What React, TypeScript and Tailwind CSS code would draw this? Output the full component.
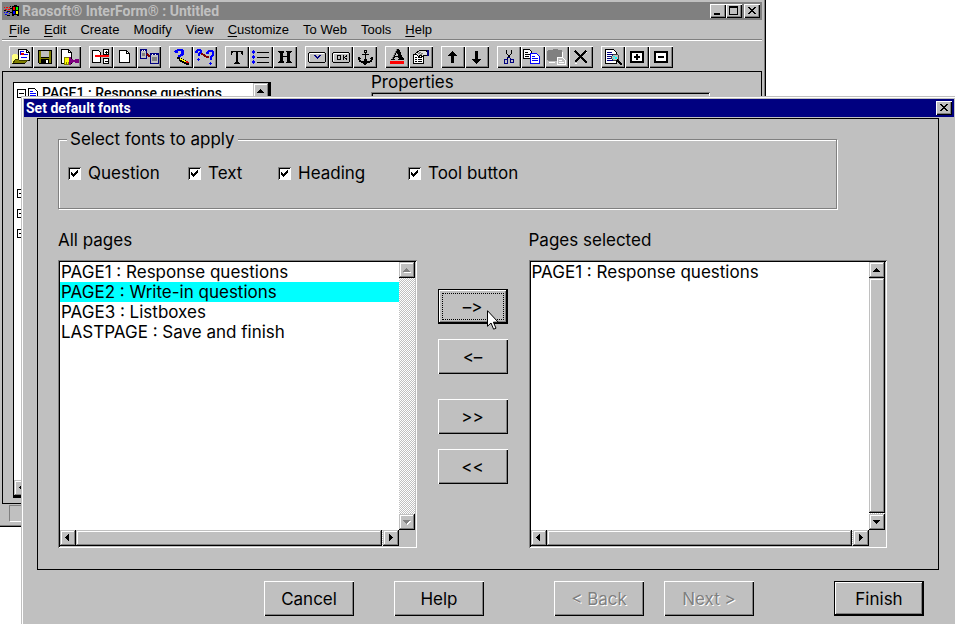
import React, { useState } from 'react';
import clsx from 'clsx';

const raised = 'bg-[#c0c0c0] shadow-[inset_1px_1px_#fff,inset_-1px_-1px_#000,inset_-2px_-2px_#808080]';
const scrollRaised =
  'bg-[#c0c0c0] shadow-[inset_-1px_-1px_#000,inset_1px_1px_#c0c0c0,inset_-2px_-2px_#808080,inset_2px_2px_#fff]';
const sunken = 'shadow-[inset_1px_1px_#808080,inset_-1px_-1px_#fff,inset_2px_2px_#000]';

type IconName =
  | 'open' | 'save' | 'preview' | 'split' | 'page' | 'link' | 'ask' | 'branch'
  | 'text' | 'list' | 'heading' | 'combo' | 'ok' | 'anchor' | 'font' | 'props'
  | 'up' | 'down' | 'cut' | 'copy' | 'paste' | 'delete' | 'find' | 'plus' | 'minus';

const toolbarGroups: IconName[][] = [
  ['open', 'save', 'preview'],
  ['split', 'page', 'link'],
  ['ask', 'branch'],
  ['text', 'list', 'heading'],
  ['combo', 'ok', 'anchor'],
  ['font', 'props'],
  ['up', 'down'],
  ['cut', 'copy', 'paste', 'delete'],
  ['find', 'plus', 'minus'],
];

const menuItems = [
  { label: 'File', underline: true },
  { label: 'Edit', underline: true },
  { label: 'Create' },
  { label: 'Modify' },
  { label: 'View' },
  { label: 'Customize', underline: true },
  { label: 'To Web' },
  { label: 'Tools' },
  { label: 'Help', underline: true },
];

const pages = [
  'PAGE1 : Response questions',
  'PAGE2 : Write-in questions',
  'PAGE3 : Listboxes',
  'LASTPAGE : Save and finish',
];

// All toolbar icons are drawn on a 20x18 grid
const icons: Record<IconName, React.ReactNode> = {
  open: (
    <>
      <path d="M7.500 1.500h8l3 3v8h-11z" fill="#fff" stroke="#000" />
      <path d="M15.500 1.500v3h3" fill="none" stroke="#000" />
      <path d="M9 3h4v1H9zM9 3h1v4H9zM13 6h4v1h-4zM10 9h6v1h-6z" fill="#00f" />
      <path d="M10 5h3v2h-3z" fill="#e00000" />
      <path d="M1 7h1V6h4v1h1v4H4l-3 5z" fill="#ffff80" />
      <path d="M1.500 15.500l3-4h3l1 1h8l-3 3z" fill="#808000" stroke="#404000" />
      <path d="M2 15.500h12" stroke="#000" />
    </>
  ),
  save: (
    <>
      <path d="M3.500 2.500h13v13h-12l-1-1z" fill="#808000" stroke="#000" />
      <path d="M6 3h8v6H6z" fill="#c0c0c0" />
      <path d="M6 9h8v1H6zM6 11h8v5H6z" fill="#000" />
      <path d="M11 12h2v3h-2z" fill="#fff" />
    </>
  ),
  preview: (
    <>
      <path d="M2.500 1.500h7l3 3v11h-10z" fill="#fff" stroke="#000" />
      <path d="M9.500 1.500v3h3" fill="none" stroke="#000" />
      <path d="M5.500 9.500h5v7h-5z" fill="#ff0" stroke="#808000" />
      <path d="M7 14v2M9 14v2" stroke="#808000" />
      <path d="M10 9h2v8h-2zM12 11h2v4h-2zM14 12h2v2h-2zM16 11h4v4h-4z" fill="#800080" />
    </>
  ),
  split: (
    <>
      <path d="M1.500 2.500h6l2 2v10h-8z" fill="#fff" stroke="#000" />
      <path d="M12.500 1.500h5v5h-5zM12.500 10.500h5v5h-5z" fill="#fff" stroke="#000" />
      <path d="M14 4h3M15.500 2.500v3M14 13h3" stroke="#000" />
      <path d="M4 7h14v2H4z" fill="red" />
    </>
  ),
  page: (
    <>
      <path d="M4.500 2.500h7l3 3v9h-10z" fill="#fff" stroke="#000" />
      <path d="M11.500 2.500v3h3" fill="none" stroke="#000" />
    </>
  ),
  link: (
    <>
      <path d="M1.500 1.500h6v9h-6zM11.500 5.500h8v10h-8z" fill="#c0c0c0" stroke="#000080" />
      <path d="M1 1h7v2H1zM11 5h9v2h-9z" fill="#000080" />
      <path d="M3 5h3v3H3zM13 9h5v4h-5z" fill="#808080" />
      <path d="M3 2h1v1H3zM5 2h1v1H5zM13 6h1v1h-1zM16 6h1v1h-1z" fill="#fff" />
      <path d="M8 6l3 3" stroke="#800000" strokeWidth="2" />
    </>
  ),
  ask: (
    <>
      <path d="M3 3h1V2h2V1h6v1h1v5h-1v1h-2v1H7V7h2V6h1V3H7v2H4V4H3z" fill="#00f" />
      <path d="M6 9h3v1h2v1h2v1h2v1h2v1h1v3h-3v-1h-2v-1h-2v-1h-2v-1H8v-2H6z" fill="#000" />
      <path d="M9 10h1v1h2v1h2v1h1v1h-2v-1h-2v-1H9z" fill="#ff0" />
      <path d="M15 13h2v1h1v1h-3z" fill="#e00000" />
    </>
  ),
  branch: (
    <>
      <path d="M0 3h1V2h1V1h4v1h1v3H6v1H5v2H3V5h1V4h1V3H3v2H0z" fill="#00f" />
      <path d="M11 4h1V3h1V2h5v1h1v5h-1v1h-1v3h-2V8h1V7h1V4h-3v2h-3z" fill="#00f" />
      <path d="M3 10h1v1h1v1H4v1H3v-1H2v-1h1zM15 14h1v1h1v1h-1v1h-1v-1h-1v-1h1z" fill="#00f" />
      <path d="M6 5h2v1h2v1h1v1h3v2h-3V9H9V8H8V7H6z" fill="#800000" />
    </>
  ),
  text: (
    <path d="M4 3h12v4h-1l-1-3h-3v10l2 1v1H7v-1l2-1V4H6L5 7H4z" fill="#000" />
  ),
  list: (
    <>
      <path d="M6 4.500h12M6 9.500h12M6 14.500h12" stroke="#000" />
      <path d="M2 2h1v1h1v2H3v1H2V5H1V3h1zM2 7h1v1h1v2H3v1H2v-1H1V8h1zM2 12h1v1h1v2H3v1H2v-1H1v-2h1z" fill="#00f" />
    </>
  ),
  heading: (
    <path d="M3 3h6v1L8 5v3h4V5l-1-1V3h6v1l-2 1v8l2 1v1h-6v-1l1-1V9H8v4l1 1v1H3v-1l2-1V5L3 4z" fill="#000" />
  ),
  combo: (
    <>
      <path d="M1.500 5.500l1-1h15l1 1v8l-1 1h-15l-1-1z" fill="#c0c0c0" stroke="#000" />
      <path d="M3 5.500h14M2.500 6v7" stroke="#fff" />
      <path d="M7 7h2v1h1v1h1V8h1V7h2v1h-1v1h-1v1h-1v1h-1v-1H9V9H8V8H7z" fill="#000080" />
    </>
  ),
  ok: (
    <>
      <path d="M1.500 5.500l1-1h15l1 1v8l-1 1h-15l-1-1z" fill="#c0c0c0" stroke="#000" />
      <path d="M3 5.500h14M2.500 6v7" stroke="#fff" />
      <path d="M6.500 7.500h3v4h-3zM12.500 7v5M15.500 7v1l-2 1.500 2 1.500v1" fill="none" stroke="#000" />
    </>
  ),
  anchor: (
    <>
      <path d="M9.500 2.500h2v2h-2z" fill="none" stroke="#000" />
      <path d="M10 5h1v10h-1zM7 6h7v1H7z" fill="#000" />
      <path d="M3 9h2v1h1v1H5v1h1v1h3v-2h3v2h3v-1h1v-1h-1v-1h1V9h2v3h-1v2h-2v1h-3v1h-1v1H9v-1H8v-1H6v-1H4v-2H3z" fill="#000" />
    </>
  ),
  font: (
    <>
      <path d="M10 1h2l4 9 1 1v1h-6v-1h1l-1-2H8l-1 2h1v1H4v-1l1-1zM10 4L8 8h3z" fill="#000" />
      <path d="M10 1L5 11" stroke="#808080" />
      <path d="M3 13h14v3H3z" fill="red" />
    </>
  ),
  props: (
    <>
      <path d="M2.500 6.500h10v9h-10z" fill="#fff" stroke="#000" />
      <path d="M4 9.500h2M7 9.500h4M4 11.500h2M7 11.500h4M4 13.500h2M7 13.500h4" stroke="#000" />
      <path d="M4.500 5.500l4-3h6l2 1v4h-3l-2 1-2-1-2 1z" fill="#ddd" stroke="#000" />
      <path d="M7 6l3-2M9 7l3-2" stroke="#808080" />
      <path d="M16 2h2v6h-2z" fill="#000080" />
    </>
  ),
  up: <path d="M9 3h1v1h1v1h1v1h1v1h1v1h-3v7H8V8H5V7h1V6h1V5h1V4h1z" fill="#000" />,
  down: <path d="M8 3h3v8h3v1h-1v1h-1v1h-1v1h-1v1H9v-1H8v-1H7v-1H6v-1H5v-1h3z" fill="#000" />,
  cut: (
    <>
      <path d="M7.500 2v3l4 6M12.500 2v3l-4 6" fill="none" stroke="#000" />
      <path d="M5.500 11.500h3v4h-3zM11.500 11.500h3v3h-3zM8 10l2-1 2 2" fill="none" stroke="#000080" />
    </>
  ),
  copy: (
    <>
      <path d="M.5 1.500h6l2 2v7h-8z" fill="#fff" stroke="#000" />
      <path d="M2 4.500h3M2 6.500h5M2 8.500h4" stroke="#000" />
      <path d="M7.500 5.500h6l3 3v7h-9z" fill="#fff" stroke="#00f" />
      <path d="M9 8.500h3M9 10.500h6M9 12.500h6" stroke="#00f" />
    </>
  ),
  paste: (
    <>
      <path d="M2 2h3l1-1h4l1 1h3l1 1v10H1L0 12V3z" fill="#808080" />
      <path d="M15.500 4v5M2 14.500h6" stroke="#fff" />
      <path d="M10.500 9.500h5l3 3v4h-8z" fill="#c0c0c0" stroke="#fff" />
      <path d="M12 12.500h3M12 14.500h5" stroke="#fff" />
    </>
  ),
  delete: (
    <>
      <path d="M4 3l12 12M15 3L4 14" stroke="#000" strokeWidth="2" />
      <path d="M4 15.500h2M15 4.500h1" stroke="#fff" />
    </>
  ),
  find: (
    <>
      <path d="M2.500 1.500h8l3 3v11h-11z" fill="#fff" stroke="#000" />
      <path d="M4 4.500h5M4 6.500h8M4 8.500h5M4 10.500h4M4 12.500h7" stroke="#000080" />
      <path d="M10.500 6.500h4l1 1v4l-1 1h-4l-2-2v-2z" fill="#c0c0c0" stroke="#404040" />
      <path d="M10 8h2v1h-2zM12 9h2v2h-2zM10 10h1v1h-1z" fill="#0ff" />
      <path d="M14 12l5 5" stroke="#000" strokeWidth="2" />
    </>
  ),
  plus: (
    <>
      <path d="M4 4h12v10H4z" fill="#fff" stroke="#000" strokeWidth="2" />
      <path d="M7 9h6M10 6v6" stroke="#000" strokeWidth="2" />
    </>
  ),
  minus: (
    <>
      <path d="M4 4h12v10H4z" fill="#fff" stroke="#000" strokeWidth="2" />
      <path d="M7 9h6" stroke="#000" strokeWidth="2" />
    </>
  ),
};

const arrowPaths = {
  up: 'M7 6h1v1h1v1h1v1h1v1H4V9h1V8h1V7h1z',
  down: 'M4 6h7v1h-1v1H9v1H8v1H7V9H6V8H5V7H4z',
  left: 'M9 4v7H8v-1H7V9H6V8H5V7h1V6h1V5h1V4z',
  right: 'M6 4v7h1v-1h1V9h1V8h1V7H9V6H8V5H7V4z',
};

const ScrollButton: React.FC<{ dir: keyof typeof arrowPaths; disabled?: boolean }> = ({ dir, disabled }) => (
  <button
    type="button"
    aria-label={`Scroll ${dir}`}
    disabled={disabled}
    className={clsx('block size-4 shrink-0', scrollRaised)}
  >
    <svg viewBox="0 0 16 16" className="size-4" shapeRendering="crispEdges">
      {disabled && <path d={arrowPaths[dir]} fill="#fff" transform="translate(1 1)" />}
      <path d={arrowPaths[dir]} fill={disabled ? '#808080' : '#000'} />
    </svg>
  </button>
);

const WindowButton: React.FC<{ label: string; path: string }> = ({ label, path }) => (
  <button type="button" aria-label={label} className={clsx('h-[14px] w-4', raised)}>
    <svg viewBox="0 0 16 14" className="h-[14px] w-4" shapeRendering="crispEdges">
      <path d={path} fill="#000" fillRule="evenodd" />
    </svg>
  </button>
);

const closePath = 'M4 3h2v1h1v1h2V4h1V3h2v1h-1v1h-1v1H9v1h1v1h1v1h1v1h-2V9H9V8H7v1H6v1H4V9h1V8h1V7h1V6H6V5H5V4H4z';

const track = 'bg-[repeating-conic-gradient(#fff_0_25%,#c0c0c0_0_50%)] bg-[length:2px_2px]';

interface PageListProps {
  label: string;
  items: string[];
  selected?: string;
  onSelect?: (page: string) => void;
  scrollable?: boolean;
}

const PageList: React.FC<PageListProps> = ({ label, items, selected, onSelect, scrollable = false }) => (
  <div className="flex min-w-0 flex-1 flex-col gap-[10px]">
    <div className="leading-5">{label}</div>
    <div className={clsx('grid h-[288px] grid-cols-[1fr_16px] grid-rows-[1fr_16px] p-[2px]', sunken)}>
      <div role="listbox" aria-label={label} className="overflow-hidden bg-white">
        {items.map((page) => (
          <div
            key={page}
            role="option"
            aria-selected={page === selected}
            onClick={() => onSelect?.(page)}
            className={clsx('px-px leading-5 whitespace-nowrap', page === selected && 'bg-[#00ffff]')}
          >
            {page}
          </div>
        ))}
      </div>
      <div className={clsx('flex flex-col', track)}>
        <ScrollButton dir="up" disabled={!scrollable} />
        <div className={clsx('mb-px flex-1', scrollable && scrollRaised)} />
        <ScrollButton dir="down" disabled={!scrollable} />
      </div>
      <div className={clsx('flex', track)}>
        <ScrollButton dir="left" />
        <div className={clsx('mr-px flex-1', scrollRaised)} />
        <ScrollButton dir="right" />
      </div>
    </div>
  </div>
);

const Push: React.FC<React.ButtonHTMLAttributes<HTMLButtonElement>> = ({ className, ...props }) => (
  <button
    type="button"
    className={clsx(
      'h-[35px] shrink-0 bg-[#c0c0c0] leading-5 disabled:text-[#808080] disabled:[text-shadow:1px_1px_#fff]',
      className,
    )}
    {...props}
  />
);

const defaultBevel = 'shadow-[inset_0_0_0_1px_#000,inset_-2px_-2px_#000,inset_2px_2px_#fff,inset_-3px_-3px_#808080]';

const MainWindow = () => (
  <div className="absolute top-0 left-0 flex h-[527px] w-[766px] flex-col bg-[#c0c0c0] p-[2px] pr-1 shadow-[inset_-1px_-1px_#000,inset_-2px_-2px_#808080]">
    <div className="flex h-[18px] shrink-0 items-center bg-[#808080] pr-[2px] pl-px">
      <svg viewBox="0 0 17 12" className="h-3 w-[17px]" shapeRendering="crispEdges">
        <path d="M9 1h2V0h3v1h2v10h-2v-1h-3v1H9z" fill="#000" />
        <path d="M1 2h1v1H1zM3 2h2v1H3zM6 2h1v1H6zM2 4h2v1H2zM5 4h2v1H5z" fill="red" />
        <path d="M1 7h1v1H1zM3 7h2v1H3zM6 8h1v1H6zM2 9h2v1H2z" fill="#00f" />
        <path d="M1 5h2v1H1zM4 6h3v1H4zM4 10h3v1H4zM7 1h1v1H7zM7 3h2v1H7zM7 7h2v1H7z" fill="#000" />
        <path d="M10 2h2v3h-2z" fill="red" />
        <path d="M13 2h2v3h-2z" fill="#0f0" />
        <path d="M10 6h2v3h-2z" fill="#00f" />
        <path d="M13 6h2v3h-2z" fill="#ff0" />
      </svg>
      <div className="ml-[2px] flex-1 font-[Roboto,sans-serif] text-[14px] leading-[18px] font-bold text-[#c0c0c0]">
        Raosoft® InterForm® : Untitled
      </div>
      <WindowButton label="Minimize" path="M4 9h6v2H4z" />
      <WindowButton label="Maximize" path="M3 2h9v9H3zM4 4v6h7V4z" />
      <div className="ml-[2px] flex">
        <WindowButton label="Close" path={closePath} />
      </div>
    </div>
    <nav className="flex h-5 shrink-0 items-center gap-[14px] border-b border-[#808080] pl-[7px] font-['Liberation_Sans',sans-serif] text-[13px]">
      {menuItems.map(({ label, underline }) => (
        <button key={label} type="button">
          {underline ? <span className="underline underline-offset-2">{label[0]}</span> : label[0]}
          {label.slice(1)}
        </button>
      ))}
    </nav>
    <div className="flex h-[31px] shrink-0 gap-2 border-t border-white pt-[5px] pl-[7px]">
      {toolbarGroups.map((group) => (
        <div key={group[0]} className="flex">
          {group.map((name) => (
            <button key={name} type="button" aria-label={name} className={clsx('h-[22px] w-6 p-[2px]', raised)}>
              <svg viewBox="0 0 20 18" className="h-[18px] w-5" shapeRendering="crispEdges">
                {icons[name]}
              </svg>
            </button>
          ))}
        </div>
      ))}
    </div>
    <div className="flex flex-1 items-start gap-[100px] border border-black pt-[10px] pl-[10px]">
      <div className="flex h-[416px] w-[258px] flex-col overflow-hidden border border-r-2 border-b-2 border-black bg-white">
        <div className="flex min-h-0 flex-1">
          <div className="flex-1 pl-[3px]">
            <div className="flex h-5 items-center gap-[2px]">
              <TreeBox />
              <svg viewBox="0 0 10 10" className="size-[10px]" shapeRendering="crispEdges">
                <path d="M.5 .5h6l3 3v6h-9z" fill="#fff" stroke="#000" />
                <path d="M2 3.500h3M2 5.500h6M2 7.500h6" stroke="#00f" />
              </svg>
              <span className="ml-[2px] font-[Roboto,sans-serif] text-[14px] leading-5 font-medium whitespace-nowrap">
                {pages[0]}
              </span>
            </div>
            <div className="mt-20">
              {pages.slice(1).map((page) => (
                <div key={page} className="flex h-5 items-center">
                  <TreeBox />
                </div>
              ))}
            </div>
          </div>
          <div className={track}>
            <ScrollButton dir="up" />
          </div>
        </div>
        <div className={track}>
          <ScrollButton dir="left" />
        </div>
      </div>
      <div className="-mt-[10px] w-[339px]">
        <div className="leading-5">Properties</div>
        <div className={clsx('h-[380px]', sunken)} />
      </div>
    </div>
    <div className="mt-px mb-[3px] ml-[7px] h-[17px] shrink-0 border border-[#808080] border-b-white" />
  </div>
);

const TreeBox = () => (
  <svg viewBox="0 0 9 9" className="size-[9px]" shapeRendering="crispEdges">
    <path d="M.5 .5h8v8h-8z" fill="#fff" stroke="#000" />
    <path d="M2 4.500h5" stroke="#000" />
  </svg>
);

const fontTargets = [
  { id: 'question', label: 'Question', width: 'w-[120px]' },
  { id: 'text', label: 'Text', width: 'w-[90px]' },
  { id: 'heading', label: 'Heading', width: 'w-[130px]' },
  { id: 'tool', label: 'Tool button', width: 'w-[130px]' },
];

const FontsDialog = () => {
  const [checked, setChecked] = useState<string[]>(fontTargets.map((t) => t.id));
  const [current, setCurrent] = useState(pages[1]);
  const [chosen, setChosen] = useState([pages[0]]);

  const toggle = (id: string) =>
    setChecked((prev) => (prev.includes(id) ? prev.filter((c) => c !== id) : [...prev, id]));

  const addPage = () => setChosen((prev) => (prev.includes(current) ? prev : [...prev, current]));

  return (
    <div className="absolute top-24 right-0 bottom-0 left-[21px] flex flex-col bg-[#c0c0c0] pt-[3px] shadow-[inset_1px_1px_#c0c0c0,inset_2px_2px_#fff]">
      <div className="mr-px ml-[3px] flex h-[18px] shrink-0 items-center bg-[#000080] pr-[2px] pl-[2px]">
        <div className="flex-1 font-[Roboto,sans-serif] text-[14px] leading-[18px] font-bold text-white">
          Set default fonts
        </div>
        <WindowButton label="Close dialog" path={closePath} />
      </div>

      <div className="mx-4 mt-px border border-black pt-[10px] pr-[51px] pb-[21px] pl-5">
        <fieldset className="mr-[50px] h-20 border border-[#808080] pl-2 shadow-[1px_1px_#fff,inset_1px_1px_#fff]">
          <legend className="bg-[#c0c0c0] px-[3px] leading-5">Select fonts to apply</legend>
          <div className="flex pt-[14px] pl-px">
            {fontTargets.map(({ id, label, width }) => (
              <label key={id} className={clsx('relative flex items-center gap-[7px] leading-5', width)}>
                <input
                  type="checkbox"
                  checked={checked.includes(id)}
                  onChange={() => toggle(id)}
                  className={clsx('peer size-[13px] appearance-none bg-white', sunken)}
                />
                <svg
                  viewBox="0 0 13 13"
                  className="pointer-events-none invisible absolute left-0 size-[13px] peer-checked:visible"
                  shapeRendering="crispEdges"
                >
                  <path d="M3 5h1v1h1v1h1V6h1V5h1V4h1V3h1v3H9v1H8v1H7v1H6v1H5V9H4V8H3z" fill="#000" />
                </svg>
                {label}
              </label>
            ))}
          </div>
        </fieldset>

        <div className="mt-[21px] flex gap-[21px]">
          <PageList label="All pages" items={pages} selected={current} onSelect={setCurrent} />
          <div className="flex w-[70px] flex-col gap-[15px] pt-[59px] [font-feature-settings:'calt'_0]">
            <Push className={clsx('relative', defaultBevel)} onClick={addPage}>
              <span className="absolute inset-1 border border-dotted border-black" />
              –&gt;
              <svg viewBox="0 0 12 20" className="absolute top-[21px] left-[49px] z-10 h-5 w-3">
                <path d="M.5 .7v15.600l3.500-3.300 2.600 6.200 2.400-1-2.600-6h4.800z" fill="#fff" stroke="#000" />
              </svg>
            </Push>
            <Push className={raised} onClick={() => setChosen((prev) => prev.slice(0, -1))}>&lt;–</Push>
            <Push className={clsx('mt-[10px]', raised)} onClick={() => setChosen(pages)}>&gt;&gt;</Push>
            <Push className={raised} onClick={() => setChosen([])}>&lt;&lt;</Push>
          </div>
          <PageList label="Pages selected" items={chosen} scrollable />
        </div>
      </div>

      <div className="flex justify-end pt-[11px] pr-[31px]">
        <Push className={clsx('mr-10 w-[90px]', raised)}>Cancel</Push>
        <Push className={clsx('mr-[70px] w-[90px]', raised)}>Help</Push>
        <Push className={clsx('mr-5 w-[90px]', raised)} disabled>&lt; Back</Push>
        <Push className={clsx('mr-20 w-[90px]', raised)} disabled>Next &gt;</Push>
        <Push className={clsx('w-[90px]', defaultBevel)}>Finish</Push>
      </div>
    </div>
  );
};

export default function App() {
  return (
    <div className="relative h-screen min-h-[624px] overflow-hidden bg-white font-[Inter,sans-serif] text-[17px] text-black">
      <MainWindow />
      <FontsDialog />
    </div>
  );
}
